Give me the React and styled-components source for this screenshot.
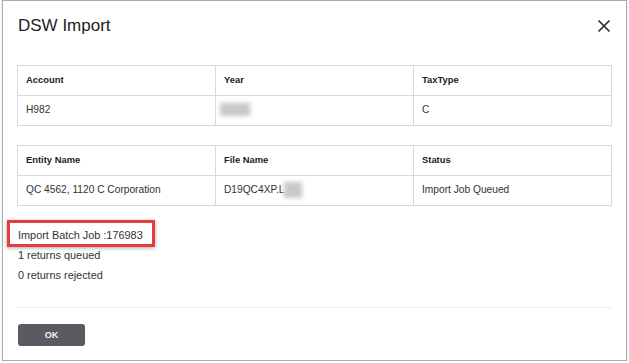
import styled, { createGlobalStyle } from "styled-components";

const GlobalStyle = createGlobalStyle`
  html, body {
    margin: 0;
    padding: 0;
    background: #ffffff;
  }
  body {
    font-family: "Liberation Sans", Arial, sans-serif;
    color: #333;
  }
`;

const Dialog = styled.section`
  position: relative;
  box-sizing: border-box;
  width: 625px;
  height: 361px;
  margin-left: 2px;
  padding: 15px 13px 0 14px;
  background: #fff;
  border: 1px solid #aaa;
  box-shadow: 0 0 2px rgba(0, 0, 0, 0.15);
  display: flex;
  flex-direction: column;
`;

const Header = styled.header`
  display: flex;
  align-items: center;
  justify-content: space-between;
`;

const Title = styled.h2`
  margin: 0 0 0 1px;
  font-size: 17px;
  line-height: 20px;
  font-weight: 400;
  color: #222;
`;

const CloseButton = styled.button`
  display: flex;
  padding: 0;
  margin-right: 3px;
  border: 0;
  background: none;
  cursor: pointer;
`;

const Table = styled.table`
  width: 595px;
  margin-top: ${(p) => p.$top}px;
  border-collapse: collapse;
  table-layout: fixed;
  font-size: 10.2px;
`;

const Row = styled.tr`
  height: 30px;
`;

const Th = styled.th`
  box-sizing: border-box;
  padding: 0 0 1px 8px;
  border: 1px solid #d9d9d9;
  text-align: left;
  font-size: 9.4px;
  line-height: 12px;
  font-weight: 700;
  color: #222;
`;

const Td = styled.td`
  box-sizing: border-box;
  padding: 0 0 2px 8px;
  border: 1px solid #d9d9d9;
  line-height: 12px;
  color: #333;
  white-space: nowrap;
`;

const Blur = styled.span`
  display: inline-block;
  vertical-align: middle;
  width: ${(p) => p.$w}px;
  height: ${(p) => p.$h}px;
  margin-left: ${(p) => p.$ml || 0}px;
  background: #c8c8c8;
  filter: blur(2px);
`;

const Messages = styled.div`
  position: relative;
  margin: 19px 0 0 1px;
  display: flex;
  flex-direction: column;
  font-size: 10.9px;
  line-height: 20px;
  color: #333;
`;

const Highlight = styled.div`
  position: absolute;
  left: -11px;
  top: -5px;
  width: 148px;
  height: 27px;
  box-sizing: border-box;
  border: 3px solid #e53d3f;
  box-shadow: 0 1px 4px rgba(0, 0, 0, 0.35);
  pointer-events: none;
`;

const Divider = styled.hr`
  width: 595px;
  margin: 22px 0 0 0;
  border: 0;
  border-top: 1px solid #ececec;
`;

const OkButton = styled.button`
  width: 67px;
  height: 22px;
  margin: 16px 0 0 1px;
  padding: 0;
  border: 0;
  border-radius: 3px;
  background: #5a5a61;
  color: #f2f2f2;
  font-family: "Liberation Sans", Arial, sans-serif;
  font-size: 9px;
  font-weight: 700;
  cursor: pointer;
`;

const CloseIcon = () => (
  <svg width="12" height="12" viewBox="0 0 12 12">
    <path d="M1 1 L11 11 M11 1 L1 11" stroke="#2b2b2b" strokeWidth="1.7" strokeLinecap="round" />
  </svg>
);

export default function App() {
  return (
    <>
      <GlobalStyle />
      <Dialog>
        <Header>
          <Title>DSW Import</Title>
          <CloseButton aria-label="Close">
            <CloseIcon />
          </CloseButton>
        </Header>

        <Table $top={29}>
          <thead>
            <Row>
              <Th>Account</Th>
              <Th>Year</Th>
              <Th>TaxType</Th>
            </Row>
          </thead>
          <tbody>
            <Row>
              <Td>H982</Td>
              <Td>
                <Blur $w={30} $h={13} $ml={-4} />
              </Td>
              <Td>C</Td>
            </Row>
          </tbody>
        </Table>

        <Table $top={19}>
          <thead>
            <Row>
              <Th>Entity Name</Th>
              <Th>File Name</Th>
              <Th>Status</Th>
            </Row>
          </thead>
          <tbody>
            <Row>
              <Td>QC 4562, 1120 C Corporation</Td>
              <Td>
                D19QC4XP.L
                <Blur $w={18} $h={16} />
              </Td>
              <Td>Import Job Queued</Td>
            </Row>
          </tbody>
        </Table>

        <Messages>
          <span>Import Batch Job :176983</span>
          <span>1 returns queued</span>
          <span>0 returns rejected</span>
          <Highlight />
        </Messages>

        <Divider />

        <div>
          <OkButton>OK</OkButton>
        </div>
      </Dialog>
    </>
  );
}
